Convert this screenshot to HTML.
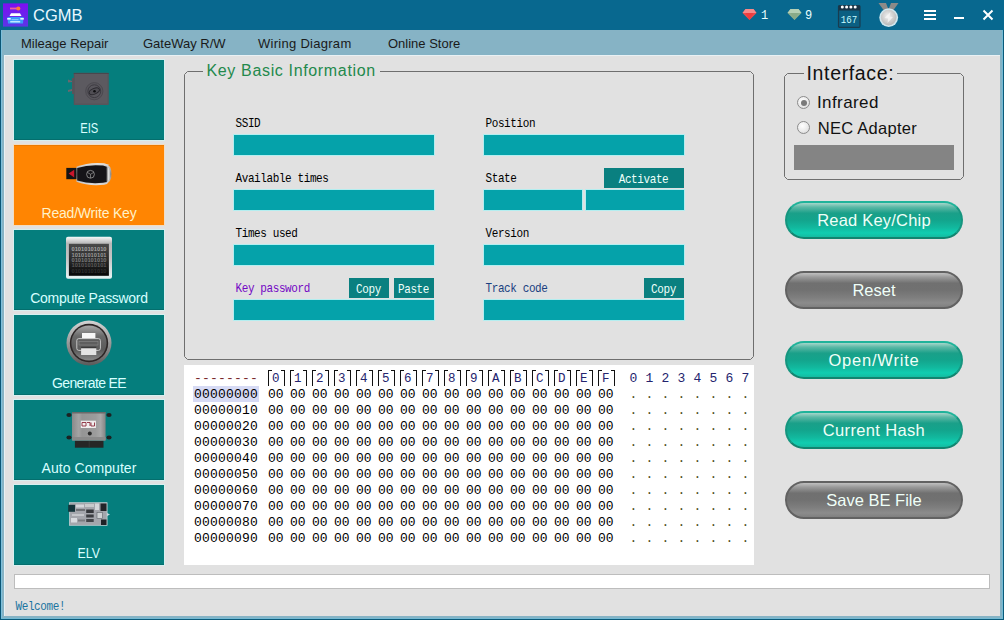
<!DOCTYPE html>
<html><head><meta charset="utf-8">
<style>
*{margin:0;padding:0;box-sizing:border-box}
html,body{width:1004px;height:620px;overflow:hidden}
body{position:relative;background:#08688f;font-family:"Liberation Sans",sans-serif}
.abs{position:absolute}
#frame{left:1px;top:30px;width:1002px;height:589px;background:#86b3c5;box-shadow:inset -1px -1px 0 #72bad4,inset 1px 0 0 #7cc0dc}
#content{left:4px;top:55px;width:996px;height:561px;background:#e1e1e1;box-shadow:inset 1px 1px 0 #e9f1f4}
.menu{top:35.5px;font-size:13px;color:#1a1a1a;white-space:nowrap;line-height:16px}
.title{left:33px;top:5px;font-size:16.5px;color:#e8f8ff;line-height:20px}
.tile{left:14px;width:150px;height:80px;background:#057e7d;box-shadow:inset 0 -1px 0 rgba(0,0,0,0.12),0 0 0 1px #d6f0f0}
.tile .lbl{position:absolute;left:0;width:150px;text-align:center;top:60px;font-size:14px;line-height:16px;color:#d8ffff;white-space:nowrap}
.orange{background:#ff8502;box-shadow:inset 0 1px 0 rgba(120,60,0,0.15),0 0 0 1px #f4dcc0}
.orange .lbl{color:#fff2c8}
.mono{font-family:"Liberation Mono",monospace}
.lab{font-family:"Liberation Mono",monospace;font-size:11px;letter-spacing:-0.4px;transform:scaleY(1.12);transform-origin:0 0;color:#000;line-height:12px;white-space:nowrap}
.box{background:#05a2aa;height:20px;box-shadow:0 0 0 1px #b4eef0}
.btn{background:#0a8080;height:20px;color:#effffa;font-family:"Liberation Mono",monospace;font-size:11px;letter-spacing:-0.4px;text-indent:-0.5px;text-align:center;line-height:24px}
.btn span{display:inline-block;transform:scaleY(1.12);transform-origin:50% 60%}
.pill{left:785px;width:178px;height:38px;border-radius:19px;text-align:center;font-size:16.5px;line-height:34px;color:#effff8}
.green{background:linear-gradient(#a6d6ca 0%,#5cb8a6 12%,#1aa089 30%,#13a48c 50%,#12b89e 72%,#10cdb0 88%,#14bca1 100%);border:2px solid #16957f;border-top-color:#1fb39a;border-bottom-color:#12846f}
.grey{background:linear-gradient(#c0c0c0 0%,#9a9a9a 12%,#707070 30%,#717171 50%,#7e7e7e 72%,#8c8c8c 88%,#808080 100%);border:2px solid #626262}
.hex{font-family:"Liberation Mono",monospace;font-size:12px;line-height:16px;white-space:pre;color:#222}
.hx{font-family:"Liberation Mono",monospace;font-size:12px;line-height:16px;white-space:pre;color:#000;font-size:13px}
.hr i{font-style:normal;display:inline-block;width:22px}
.brl{top:370px;width:4px;height:16px;border-left:1px solid #111;border-top:1px solid #111}
.brr{top:370px;width:4px;height:16px;border-right:1px solid #111;border-top:1px solid #111}
.radio{width:13px;height:13px;border-radius:7px;border:1px solid #8c8c8c;background:radial-gradient(circle at 40% 35%,#fff,#e8e8e8 60%,#cfcfcf)}
</style></head>
<body>
<!-- title bar -->

<div class="abs title">CGMB</div>
<!-- app icon -->
<svg class="abs" style="left:0;top:0" width="32" height="30" viewBox="0 0 32 30">
<defs><linearGradient id="pg" x1="0" y1="0" x2="0" y2="1"><stop offset="0" stop-color="#7d0ff2"/><stop offset="1" stop-color="#5b35e6"/></linearGradient>
<linearGradient id="cg" x1="0" y1="0" x2="0" y2="1"><stop offset="0" stop-color="#ffffff"/><stop offset="0.45" stop-color="#e8f4ff"/><stop offset="0.55" stop-color="#3aa0ff"/><stop offset="1" stop-color="#2f7ef0"/></linearGradient></defs>
<rect x="3" y="3.4" width="25" height="23.2" fill="url(#pg)"/>
<rect x="10" y="7.6" width="7" height="1.8" fill="#f2609c"/>
<circle cx="18.3" cy="8.5" r="2.1" fill="#ff7a3a"/>
<path d="M9.5 16 L11 13.2 L20 13.2 L21.5 16 Z" fill="#fff"/>
<path d="M7.5 17 L23.5 17 L23 23.5 L8 23.5 Z" fill="#3d98fb"/>
<rect x="7.2" y="18" width="3.5" height="1.6" fill="#e8faff"/>
<rect x="20.3" y="18" width="3.5" height="1.6" fill="#e8faff"/>
<rect x="10.2" y="21" width="10" height="1.5" fill="#bfe8ff"/>
<rect x="11.5" y="19.2" width="7" height="1" fill="#8fd0ff"/>
</svg>

<!-- gems -->
<svg class="abs" style="left:741px;top:7px" width="18" height="15" viewBox="0 0 18 15">
<path d="M1.5 6 L4.5 2 L12.5 2 L15.5 6 L8.5 13 Z" fill="#ee4a4c"/>
<path d="M1.5 6 L4.5 2 L12.5 2 L15.5 6 Z" fill="#f78a8a"/>
<path d="M4.5 6 L8.5 13 L12.5 6 Z" fill="#f03c3e"/>
</svg>
<div class="abs" style="left:761px;top:10px;font-family:'Liberation Mono',monospace;font-size:12px;line-height:12px;color:#eaffff">1</div>
<svg class="abs" style="left:786px;top:7px" width="18" height="15" viewBox="0 0 18 15">
<path d="M1.5 6 L4.5 2 L12.5 2 L15.5 6 L8.5 13 Z" fill="#8fb08f"/>
<path d="M1.5 6 L4.5 2 L12.5 2 L15.5 6 Z" fill="#b5d0b5"/>
<path d="M4.5 6 L8.5 13 L12.5 6 Z" fill="#88aa88"/>
</svg>
<div class="abs" style="left:805px;top:10px;font-family:'Liberation Mono',monospace;font-size:12px;line-height:12px;color:#eaffff">9</div>

<!-- calendar -->
<svg class="abs" style="left:832px;top:0" width="32" height="30" viewBox="0 0 32 30">
<rect x="6.5" y="5.5" width="21.5" height="21.8" rx="1" fill="#0b5f82" stroke="#183c50" stroke-width="1.2"/>
<rect x="6.5" y="5.5" width="21.5" height="5" fill="#1a3445"/>
<circle cx="10.3" cy="7" r="1.5" fill="#fff"/><circle cx="14.6" cy="7" r="1.5" fill="#fff"/><circle cx="18.9" cy="7" r="1.5" fill="#fff"/><circle cx="23.2" cy="7" r="1.5" fill="#fff"/>
<text x="17.1" y="23" text-anchor="middle" font-family="Liberation Mono" font-size="11" textLength="16.5" lengthAdjust="spacingAndGlyphs" fill="#c8fbff">167</text>
</svg>

<!-- medal -->
<svg class="abs" style="left:876px;top:0" width="26" height="30" viewBox="0 0 26 30">
<defs><radialGradient id="mg" cx="0.45" cy="0.4" r="0.65"><stop offset="0" stop-color="#f0f0f0"/><stop offset="1" stop-color="#b4b4b4"/></radialGradient></defs>
<path d="M2.5 3 L10 3 L12.5 9.5 L7.5 10 Z" fill="#8c8a88"/>
<path d="M22.5 3 L15 3 L12.5 9.5 L17.5 10 Z" fill="#8c8a88"/>
<circle cx="12.7" cy="17.6" r="9.4" fill="#cfe6ee"/>
<circle cx="12.7" cy="17.6" r="7.8" fill="url(#mg)"/>
<path d="M14.5 12 L13.5 16.5 L17 17 L11.5 23 L12 18.5 L8.5 18 Z" fill="#f8f8f8" opacity="0.7"/>
</svg>

<!-- menu / min / close -->
<div class="abs" style="left:924px;top:10px;width:12px;height:2px;background:#fff"></div>
<div class="abs" style="left:924px;top:14px;width:12px;height:2px;background:#fff"></div>
<div class="abs" style="left:924px;top:18px;width:12px;height:2px;background:#fff"></div>
<div class="abs" style="left:954px;top:17px;width:10px;height:2px;background:#fff"></div>
<svg class="abs" style="left:982px;top:9px" width="12" height="12" viewBox="0 0 12 12"><path d="M1.5 1.5 L10.5 10.5 M10.5 1.5 L1.5 10.5" stroke="#fff" stroke-width="2"/></svg>


<div id="frame" class="abs"></div><div class="abs" style="left:0;top:619px;width:1004px;height:1px;background:#0a5a7a"></div><div class="abs" style="left:1003px;top:30px;width:1px;height:590px;background:#0a5a7a"></div><div class="abs" style="left:0;top:30px;width:1px;height:590px;background:#0a5676"></div>
<div id="content" class="abs"></div>

<div class="abs menu" style="left:21px">Mileage Repair</div>
<div class="abs menu" style="left:143px">GateWay R/W</div>
<div class="abs menu" style="left:258px;letter-spacing:0.28px">Wiring Diagram</div>
<div class="abs menu" style="left:388px">Online Store</div>

<!-- tiles -->
<div class="abs tile" style="top:60px"><div class="lbl"><span style="display:inline-block;transform:scaleX(0.8)">EIS</span></div></div>
<div class="abs tile orange" style="top:145px"><div class="lbl" style="letter-spacing:-0.2px">Read/Write Key</div></div>
<div class="abs tile" style="top:230px"><div class="lbl" style="letter-spacing:-0.3px">Compute Password</div></div>
<div class="abs tile" style="top:315px"><div class="lbl" style="letter-spacing:-0.65px">Generate EE</div></div>
<div class="abs tile" style="top:400px"><div class="lbl" style="letter-spacing:0.05px">Auto Computer</div></div>
<div class="abs tile" style="top:485px"><div class="lbl"><span style="display:inline-block;transform:scaleX(0.88)">ELV</span></div></div>


<!-- EIS icon -->
<svg class="abs" style="left:64px;top:68px" width="52" height="42" viewBox="0 0 52 42">
<path d="M4 11.5 L8 13 L8 14 L4 14.5 Z M4 22 L8 21 L8 23 L4 24 Z" fill="#6a686e"/>
<rect x="8" y="10" width="2.5" height="16" fill="#57555b"/>
<rect x="9.7" y="4.7" width="35.1" height="32.3" rx="1" fill="#57555b"/>
<rect x="11" y="6" width="32.5" height="29.5" fill="#5c5a60"/>
<path d="M9.7 5.5 H44.8" stroke="#49474d" stroke-width="1.2"/>
<circle cx="30.3" cy="23.2" r="8.6" fill="#58565c"/>
<circle cx="30.3" cy="23.2" r="8.6" fill="none" stroke="#4c4a50" stroke-width="1"/>
<circle cx="30.3" cy="23.2" r="6.4" fill="none" stroke="#3a383e" stroke-width="0.9"/>
<ellipse cx="30.3" cy="23.2" rx="5.4" ry="2.8" transform="rotate(-22 30.3 23.2)" fill="#504e54" stroke="#2a282e" stroke-width="0.9"/>
<circle cx="30.5" cy="23.2" r="1.3" fill="#0e0e10"/>
</svg>

<!-- key fob -->
<svg class="abs" style="left:60px;top:155px" width="60" height="35" viewBox="0 0 60 35">
<defs><linearGradient id="fobs" x1="0" y1="0" x2="0" y2="1"><stop offset="0" stop-color="#e8e8e8"/><stop offset="0.5" stop-color="#8a8a8a"/><stop offset="1" stop-color="#e0e0e0"/></linearGradient>
<linearGradient id="fobe" x1="0" y1="0" x2="1" y2="0"><stop offset="0" stop-color="#777"/><stop offset="0.5" stop-color="#e4e4e4"/><stop offset="1" stop-color="#9a9a9a"/></linearGradient></defs>
<rect x="6.3" y="12.9" width="11" height="11.3" fill="#141414"/>
<path d="M8.6 18.6 L14.2 14.8 L14.2 22.4 Z" fill="#c8162c"/>
<path d="M16.5 11.8 Q29 6.8 44 8.3 Q51.5 9.5 51.5 19 Q51.5 28.5 44 29.8 Q29 31.5 16.5 26.8 Z" fill="url(#fobs)"/>
<path d="M17.2 13 Q29 9.2 43 10.6 L46.8 11.8 L46.8 27 L43 27.8 Q29 29.3 17.2 25.6 Z" fill="#151418"/>
<path d="M46.8 12 Q50.5 13 50.5 19 Q50.5 25.5 46.8 26.6 Z" fill="url(#fobe)"/>
<circle cx="30.5" cy="19.3" r="3.9" fill="none" stroke="#9a9a9a" stroke-width="0.8"/>
<path d="M30.5 23 L30.5 19.3 L27.3 17.4 M30.5 19.3 L33.7 17.4" stroke="#9a9a9a" stroke-width="0.7" fill="none"/>
</svg>
<!-- compute password -->
<svg class="abs" style="left:64px;top:235px" width="50" height="46" viewBox="0 0 50 46">
<defs><linearGradient id="cpf" x1="0" y1="0" x2="0" y2="1"><stop offset="0" stop-color="#f4fbfb"/><stop offset="0.08" stop-color="#d8d8d8"/><stop offset="0.16" stop-color="#b8b8b8"/><stop offset="0.5" stop-color="#c4c4c4"/><stop offset="1" stop-color="#e8f4f4"/></linearGradient>
<linearGradient id="cps" x1="0" y1="0" x2="0" y2="1"><stop offset="0" stop-color="#4a4a4a"/><stop offset="0.5" stop-color="#2a2a2a"/><stop offset="1" stop-color="#060606"/></linearGradient></defs>
<rect x="2" y="1.7" width="46" height="42.1" rx="2" fill="url(#cpf)"/>
<rect x="4.9" y="8.8" width="40" height="32" fill="url(#cps)"/>
<g font-family="Liberation Sans" font-size="6" font-weight="bold" style="-webkit-font-smoothing:antialiased">
<text x="7.5" y="16.3" textLength="35" lengthAdjust="spacingAndGlyphs" fill="#a8a8a8">01010101010</text>
<text x="7.5" y="21.6" textLength="35" lengthAdjust="spacingAndGlyphs" fill="#9a9a9a">10101010101</text>
<text x="7.5" y="26.9" textLength="35" lengthAdjust="spacingAndGlyphs" fill="#7c7c7c">01010101010</text>
<text x="7.5" y="32.2" textLength="35" lengthAdjust="spacingAndGlyphs" fill="#5a5a5a">10101010101</text>
<text x="7.5" y="37.5" textLength="35" lengthAdjust="spacingAndGlyphs" fill="#303030">01010101010</text>
</g>
</svg>

<!-- generate EE -->
<svg class="abs" style="left:63px;top:318px" width="52" height="52" viewBox="0 0 52 52">
<defs><linearGradient id="ring" x1="0" y1="0" x2="0" y2="1"><stop offset="0" stop-color="#d4d4d4"/><stop offset="0.5" stop-color="#9a9a9a"/><stop offset="1" stop-color="#5a5a5a"/></linearGradient>
<linearGradient id="inner" x1="0" y1="0" x2="0" y2="1"><stop offset="0" stop-color="#a8a8a8"/><stop offset="0.3" stop-color="#6a6a6a"/><stop offset="0.7" stop-color="#5a5a5a"/><stop offset="1" stop-color="#8a8a8a"/></linearGradient></defs>
<circle cx="26" cy="25" r="22.5" fill="url(#ring)"/>
<circle cx="26" cy="25" r="19.2" fill="#2c2626"/>
<circle cx="26" cy="25" r="17.6" fill="url(#inner)"/>
<rect x="19" y="15" width="13.4" height="5.6" fill="#f6f6f6"/>
<rect x="13.8" y="20.6" width="23.6" height="11.8" rx="2" fill="#5e5e5e" stroke="#d4d4d4" stroke-width="0.9"/>
<rect x="16" y="23.5" width="19" height="3.5" fill="none" stroke="#8a8a8a" stroke-width="0.6"/>
<rect x="18.1" y="28.7" width="15.2" height="1.6" fill="#3a3a3a"/>
<rect x="18.1" y="30.3" width="15.2" height="6.7" fill="#e4e4e4"/>
</svg>

<!-- auto computer -->
<svg class="abs" style="left:60px;top:405px" width="60" height="50" viewBox="0 0 60 50">
<defs><linearGradient id="ecu" x1="0" y1="0" x2="1" y2="0"><stop offset="0" stop-color="#8a8a8a"/><stop offset="0.2" stop-color="#a4a4a4"/><stop offset="0.3" stop-color="#959595"/><stop offset="0.7" stop-color="#9c9c9c"/><stop offset="0.85" stop-color="#a8a8a8"/><stop offset="1" stop-color="#848484"/></linearGradient></defs>
<ellipse cx="9" cy="10" rx="2.6" ry="1.9" fill="#1c2222"/>
<ellipse cx="49" cy="10" rx="2.6" ry="1.9" fill="#1c2222"/>
<ellipse cx="9" cy="32.5" rx="2.6" ry="1.9" fill="#1c2222"/>
<ellipse cx="49" cy="32.5" rx="2.6" ry="1.9" fill="#1c2222"/>
<rect x="12" y="7" width="33.6" height="28.5" rx="1" fill="url(#ecu)"/>
<rect x="12" y="7" width="33.6" height="1.5" fill="#6a6a6a"/>
<rect x="12" y="32" width="33.6" height="3.5" fill="#8a8a8a"/>
<rect x="20.8" y="15.7" width="15.1" height="7.3" fill="#f0eeee"/>
<path d="M22 17.5 H26 V21 H22 Z M27 17.5 H30 V21 M31 17.5 V21 H34.5 V17.5" fill="none" stroke="#8a2a3a" stroke-width="0.9"/>
<circle cx="29.8" cy="28.6" r="2" fill="#2a2a2a"/>
<rect x="14.9" y="35.9" width="28.6" height="6.8" fill="#262626"/>
<path d="M29.2 36 V42.7" stroke="#3a3a3a" stroke-width="0.8"/>
</svg>

<!-- ELV -->
<svg class="abs" style="left:60px;top:495px" width="60" height="40" viewBox="0 0 60 40">
<rect x="9.4" y="7.7" width="37.7" height="22.6" fill="#a4a6ac"/>
<rect x="9.4" y="7.7" width="37.7" height="22.6" fill="none" stroke="#c8d4d8" stroke-width="0.7"/>
<rect x="8.2" y="9.8" width="6.8" height="7" fill="#14343a"/>
<rect x="16" y="9.5" width="8" height="3" fill="#d4d6da"/>
<rect x="25" y="9" width="9" height="3" fill="#c8cacc"/>
<rect x="16" y="14" width="9" height="2" fill="#6e7074"/>
<rect x="26.2" y="14.5" width="7.5" height="3.5" fill="#34363a"/>
<rect x="26.2" y="19.5" width="7.5" height="3" fill="#3a3c40"/>
<rect x="26.2" y="24" width="7.5" height="3" fill="#44464a"/>
<rect x="12" y="19" width="12" height="2" fill="#c4c6ca"/>
<rect x="11" y="23" width="6" height="4.5" fill="#d8dade"/>
<rect x="18" y="24.5" width="7" height="2" fill="#7a7c80"/>
<rect x="35" y="8.5" width="4" height="6.5" fill="#d4d6da"/>
<rect x="40.5" y="8.5" width="6" height="7.5" fill="#222428"/>
<rect x="37" y="17.5" width="5.5" height="6" fill="#cfd2d4" stroke="#60646a" stroke-width="0.6"/>
<rect x="41" y="24.5" width="5.5" height="5.5" fill="#202226"/>
<path d="M47 18 L50 19.5 L47 21 Z" fill="#c4d8dc"/>
</svg>

<!-- info group -->
<svg class="abs" style="left:0;top:0" width="1004" height="620" viewBox="0 0 1004 620">
<path d="M184.5 74.5 L187.5 71.5 L750.5 71.5 L753.5 74.5 L753.5 356.5 L750.5 359.5 L187.5 359.5 L184.5 356.5 Z" fill="none" stroke="#6e6e6e" stroke-width="1"/>
</svg>
<div class="abs" style="left:202.5px;top:61px;padding:0 4px;background:#e1e1e1;font-size:16px;line-height:20px;letter-spacing:0.65px;color:#23894c">Key Basic Information</div>

<div class="abs lab" style="left:235.5px;top:117px">SSID</div>
<div class="abs box" style="left:234px;top:135px;width:200px"></div>
<div class="abs lab" style="left:485.5px;top:117px">Position</div>
<div class="abs box" style="left:484px;top:135px;width:200px"></div>

<div class="abs lab" style="left:235.5px;top:172px">Available times</div>
<div class="abs box" style="left:234px;top:190px;width:200px"></div>
<div class="abs lab" style="left:485.5px;top:172px">State</div>
<div class="abs btn" style="left:604px;top:168px;width:80px"><span>Activate</span></div>
<div class="abs box" style="left:484px;top:190px;width:98px"></div>
<div class="abs box" style="left:586px;top:190px;width:98px"></div>

<div class="abs lab" style="left:235.5px;top:227px">Times used</div>
<div class="abs box" style="left:234px;top:245px;width:200px"></div>
<div class="abs lab" style="left:485.5px;top:227px">Version</div>
<div class="abs box" style="left:484px;top:245px;width:200px"></div>

<div class="abs lab" style="left:235.5px;top:282px;color:#7408c4">Key password</div>
<div class="abs btn" style="left:349px;top:278px;width:40px"><span>Copy</span></div>
<div class="abs btn" style="left:394px;top:278px;width:40px"><span>Paste</span></div>
<div class="abs box" style="left:234px;top:300px;width:200px"></div>
<div class="abs lab" style="left:485.5px;top:282px;color:#1a3f80">Track code</div>
<div class="abs btn" style="left:644px;top:278px;width:40px"><span>Copy</span></div>
<div class="abs box" style="left:484px;top:300px;width:200px"></div>

<!-- hex -->
<div class="abs" style="left:184px;top:365px;width:570px;height:200px;background:#fff"></div>
<div class="abs hx" style="left:194px;top:371px;color:#7a2a2a;letter-spacing:0.2px">--------</div><div class="abs brl" style="left:268px"></div><div class="abs brr" style="left:281px"></div><div class="abs hx" style="left:272px;top:371px;color:#24246e;font-size:12.5px">0</div><div class="abs brl" style="left:290px"></div><div class="abs brr" style="left:303px"></div><div class="abs hx" style="left:294px;top:371px;color:#24246e;font-size:12.5px">1</div><div class="abs brl" style="left:312px"></div><div class="abs brr" style="left:325px"></div><div class="abs hx" style="left:316px;top:371px;color:#24246e;font-size:12.5px">2</div><div class="abs brl" style="left:334px"></div><div class="abs brr" style="left:347px"></div><div class="abs hx" style="left:338px;top:371px;color:#24246e;font-size:12.5px">3</div><div class="abs brl" style="left:356px"></div><div class="abs brr" style="left:369px"></div><div class="abs hx" style="left:360px;top:371px;color:#24246e;font-size:12.5px">4</div><div class="abs brl" style="left:378px"></div><div class="abs brr" style="left:391px"></div><div class="abs hx" style="left:382px;top:371px;color:#24246e;font-size:12.5px">5</div><div class="abs brl" style="left:400px"></div><div class="abs brr" style="left:413px"></div><div class="abs hx" style="left:404px;top:371px;color:#24246e;font-size:12.5px">6</div><div class="abs brl" style="left:422px"></div><div class="abs brr" style="left:435px"></div><div class="abs hx" style="left:426px;top:371px;color:#24246e;font-size:12.5px">7</div><div class="abs brl" style="left:444px"></div><div class="abs brr" style="left:457px"></div><div class="abs hx" style="left:448px;top:371px;color:#24246e;font-size:12.5px">8</div><div class="abs brl" style="left:466px"></div><div class="abs brr" style="left:479px"></div><div class="abs hx" style="left:470px;top:371px;color:#24246e;font-size:12.5px">9</div><div class="abs brl" style="left:488px"></div><div class="abs brr" style="left:501px"></div><div class="abs hx" style="left:492px;top:371px;color:#24246e;font-size:12.5px">A</div><div class="abs brl" style="left:510px"></div><div class="abs brr" style="left:523px"></div><div class="abs hx" style="left:514px;top:371px;color:#24246e;font-size:12.5px">B</div><div class="abs brl" style="left:532px"></div><div class="abs brr" style="left:545px"></div><div class="abs hx" style="left:536px;top:371px;color:#24246e;font-size:12.5px">C</div><div class="abs brl" style="left:554px"></div><div class="abs brr" style="left:567px"></div><div class="abs hx" style="left:558px;top:371px;color:#24246e;font-size:12.5px">D</div><div class="abs brl" style="left:576px"></div><div class="abs brr" style="left:589px"></div><div class="abs hx" style="left:580px;top:371px;color:#24246e;font-size:12.5px">E</div><div class="abs brl" style="left:598px"></div><div class="abs brr" style="left:611px"></div><div class="abs hx" style="left:602px;top:371px;color:#24246e;font-size:12.5px">F</div><div class="abs hx" style="left:629.5px;top:371px;color:#24246e;letter-spacing:0.2px">0 1 2 3 4 5 6 7</div>
<div class="abs" style="left:193px;top:386px;width:66px;height:16px;background:#d6daf4"></div>
<div class="abs hx" style="left:194px;top:387px;letter-spacing:0.2px">00000000</div><div class="abs hx hr" style="left:268px;top:387px"><i>00</i><i>00</i><i>00</i><i>00</i><i>00</i><i>00</i><i>00</i><i>00</i><i>00</i><i>00</i><i>00</i><i>00</i><i>00</i><i>00</i><i>00</i><i>00</i></div><div class="abs hx" style="left:629.5px;top:387px;color:#4e4e1c;letter-spacing:0.2px">. . . . . . . .</div>
<div class="abs hx" style="left:194px;top:403px;letter-spacing:0.2px">00000010</div><div class="abs hx hr" style="left:268px;top:403px"><i>00</i><i>00</i><i>00</i><i>00</i><i>00</i><i>00</i><i>00</i><i>00</i><i>00</i><i>00</i><i>00</i><i>00</i><i>00</i><i>00</i><i>00</i><i>00</i></div><div class="abs hx" style="left:629.5px;top:403px;color:#4e4e1c;letter-spacing:0.2px">. . . . . . . .</div>
<div class="abs hx" style="left:194px;top:419px;letter-spacing:0.2px">00000020</div><div class="abs hx hr" style="left:268px;top:419px"><i>00</i><i>00</i><i>00</i><i>00</i><i>00</i><i>00</i><i>00</i><i>00</i><i>00</i><i>00</i><i>00</i><i>00</i><i>00</i><i>00</i><i>00</i><i>00</i></div><div class="abs hx" style="left:629.5px;top:419px;color:#4e4e1c;letter-spacing:0.2px">. . . . . . . .</div>
<div class="abs hx" style="left:194px;top:435px;letter-spacing:0.2px">00000030</div><div class="abs hx hr" style="left:268px;top:435px"><i>00</i><i>00</i><i>00</i><i>00</i><i>00</i><i>00</i><i>00</i><i>00</i><i>00</i><i>00</i><i>00</i><i>00</i><i>00</i><i>00</i><i>00</i><i>00</i></div><div class="abs hx" style="left:629.5px;top:435px;color:#4e4e1c;letter-spacing:0.2px">. . . . . . . .</div>
<div class="abs hx" style="left:194px;top:451px;letter-spacing:0.2px">00000040</div><div class="abs hx hr" style="left:268px;top:451px"><i>00</i><i>00</i><i>00</i><i>00</i><i>00</i><i>00</i><i>00</i><i>00</i><i>00</i><i>00</i><i>00</i><i>00</i><i>00</i><i>00</i><i>00</i><i>00</i></div><div class="abs hx" style="left:629.5px;top:451px;color:#4e4e1c;letter-spacing:0.2px">. . . . . . . .</div>
<div class="abs hx" style="left:194px;top:467px;letter-spacing:0.2px">00000050</div><div class="abs hx hr" style="left:268px;top:467px"><i>00</i><i>00</i><i>00</i><i>00</i><i>00</i><i>00</i><i>00</i><i>00</i><i>00</i><i>00</i><i>00</i><i>00</i><i>00</i><i>00</i><i>00</i><i>00</i></div><div class="abs hx" style="left:629.5px;top:467px;color:#4e4e1c;letter-spacing:0.2px">. . . . . . . .</div>
<div class="abs hx" style="left:194px;top:483px;letter-spacing:0.2px">00000060</div><div class="abs hx hr" style="left:268px;top:483px"><i>00</i><i>00</i><i>00</i><i>00</i><i>00</i><i>00</i><i>00</i><i>00</i><i>00</i><i>00</i><i>00</i><i>00</i><i>00</i><i>00</i><i>00</i><i>00</i></div><div class="abs hx" style="left:629.5px;top:483px;color:#4e4e1c;letter-spacing:0.2px">. . . . . . . .</div>
<div class="abs hx" style="left:194px;top:499px;letter-spacing:0.2px">00000070</div><div class="abs hx hr" style="left:268px;top:499px"><i>00</i><i>00</i><i>00</i><i>00</i><i>00</i><i>00</i><i>00</i><i>00</i><i>00</i><i>00</i><i>00</i><i>00</i><i>00</i><i>00</i><i>00</i><i>00</i></div><div class="abs hx" style="left:629.5px;top:499px;color:#4e4e1c;letter-spacing:0.2px">. . . . . . . .</div>
<div class="abs hx" style="left:194px;top:515px;letter-spacing:0.2px">00000080</div><div class="abs hx hr" style="left:268px;top:515px"><i>00</i><i>00</i><i>00</i><i>00</i><i>00</i><i>00</i><i>00</i><i>00</i><i>00</i><i>00</i><i>00</i><i>00</i><i>00</i><i>00</i><i>00</i><i>00</i></div><div class="abs hx" style="left:629.5px;top:515px;color:#4e4e1c;letter-spacing:0.2px">. . . . . . . .</div>
<div class="abs hx" style="left:194px;top:531px;letter-spacing:0.2px">00000090</div><div class="abs hx hr" style="left:268px;top:531px"><i>00</i><i>00</i><i>00</i><i>00</i><i>00</i><i>00</i><i>00</i><i>00</i><i>00</i><i>00</i><i>00</i><i>00</i><i>00</i><i>00</i><i>00</i><i>00</i></div><div class="abs hx" style="left:629.5px;top:531px;color:#4e4e1c;letter-spacing:0.2px">. . . . . . . .</div>

<!-- interface group -->
<svg class="abs" style="left:0;top:0" width="1004" height="620" viewBox="0 0 1004 620">
<path d="M784.5 76.5 L787.5 73.5 L960.5 73.5 L963.5 76.5 L963.5 176.5 L960.5 179.5 L787.5 179.5 L784.5 176.5 Z" fill="none" stroke="#6e6e6e" stroke-width="1"/>
</svg>
<div class="abs" style="left:803.5px;top:62px;padding:0 3px;background:#e1e1e1;font-size:19.5px;line-height:22px;color:#111;letter-spacing:0.65px">Interface:</div>
<div class="abs" style="left:794px;top:145px;width:160px;height:25px;background:#848484"></div>
<div class="abs radio" style="left:797px;top:96px"><div style="position:absolute;left:3px;top:3px;width:6px;height:6px;border-radius:3px;background:#7a7a7a"></div></div>
<div class="abs" style="left:817px;top:93px;font-size:17px;line-height:20px;color:#111;letter-spacing:0.4px">Infrared</div>
<div class="abs radio" style="left:797px;top:121px"></div>
<div class="abs" style="left:817.7px;top:117.5px;font-size:16.5px;line-height:20px;color:#111;letter-spacing:0.28px">NEC Adapter</div>


<div class="abs pill green" style="top:201px;letter-spacing:0.2px">Read Key/Chip</div>
<div class="abs pill grey" style="top:271px">Reset</div>
<div class="abs pill green" style="top:341px;letter-spacing:0.8px">Open/Write</div>
<div class="abs pill green" style="top:411px;letter-spacing:0.35px">Current Hash</div>
<div class="abs pill grey" style="top:481px">Save BE File</div>

<!-- progress + status -->
<div class="abs" style="left:14px;top:574px;width:976px;height:15px;background:#fff;border:1px solid #bdbdbd"></div>
<div class="abs lab" style="left:15.5px;top:600px;color:#1a74a0">Welcome!</div>
</body></html>
